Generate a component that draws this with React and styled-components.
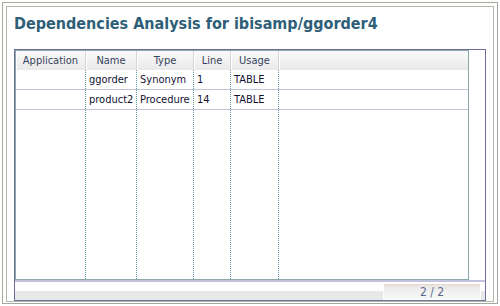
import React from 'react';
import styled, { createGlobalStyle } from 'styled-components';

const GlobalStyle = createGlobalStyle`
    body {
        margin: 0;
        background: #fff;
        font-family: "DejaVu Sans Condensed", "DejaVu Sans", sans-serif;
    }
`;

const Frame = styled.div`
    box-sizing: border-box;
    width: 496px;
    height: 302px;
    margin: 2px;
    padding: 3px 3px 1px 3px;
    border: 1px solid #a2a99e;
`;

const Window = styled.div`
    box-sizing: border-box;
    height: 100%;
    padding: 0 7px;
    border: 1px solid #b3b8ad;
    display: flex;
    flex-direction: column;
`;

const Title = styled.h1`
    margin: 0;
    height: 42px;
    padding-top: 7px;
    box-sizing: border-box;
    font-size: 16px;
    font-weight: bold;
    color: #2f5f78;
    white-space: nowrap;
`;

const Panel = styled.div`
    flex: 1;
    display: flex;
    flex-direction: column;
    border: 1px solid #6e6e9a;
    min-height: 0;
`;

const GridArea = styled.div`
    flex: 1;
    display: flex;
    padding-right: 16px;
    min-height: 0;
`;

const Grid = styled.div`
    flex: 1;
    display: flex;
    flex-direction: column;
    border: 1px solid #88a8a9;
`;

const COLUMNS = '70px 51px 57px 37px 48px 1fr';

const HeaderRow = styled.div`
    display: grid;
    grid-template-columns: ${ COLUMNS };
    height: 19px;
    background: linear-gradient(#fafafa, #e9e9e9);
`;

const HeaderCell = styled.div`
    display: flex;
    align-items: center;
    justify-content: center;
    font-size: 11px;
    color: #34445e;
    border-right: ${ p => ( p.$last ? 'none' : '1px solid #d4d4d4' ) };
    box-shadow: inset 1px 0 0 #fff;
`;

const Row = styled.div`
    display: grid;
    grid-template-columns: ${ COLUMNS };
    height: 20px;
    box-sizing: border-box;
    border-bottom: 1px solid #c1c4d8;
`;

const FillRow = styled.div`
    flex: 1;
    display: grid;
    grid-template-columns: ${ COLUMNS };
`;

const Cell = styled.div`
    display: flex;
    align-items: center;
    padding-left: 3px;
    overflow: hidden;
    font-size: 11px;
    color: #121232;
    white-space: nowrap;
    border-right: ${ p => ( p.$last ? 'none' : '1px dotted #5e9ca2' ) };
`;

const Divider = styled.div`
    height: 2px;
    background: #c2c2df;
`;

const Footer = styled.div`
    height: 18px;
    display: flex;
    justify-content: flex-end;
    padding: 1px 4px 0 0;
    box-sizing: border-box;
    background: linear-gradient(#fff 0, #fff 50%, #e8e8e8 50%, #e8e8e8 100%);
`;

const Pager = styled.div`
    width: 98px;
    box-sizing: border-box;
    border: 1px solid #fff;
    background: linear-gradient(#e6d8d0 0, #ebe8e6 15%, #f2f2f2 60%, #f6f6f6 100%);
    display: flex;
    align-items: center;
    justify-content: center;
    font-size: 12px;
    color: #5a6a8e;
`;

const columns = [ 'Application', 'Name', 'Type', 'Line', 'Usage', '' ];

const rows = [
    { app: '', name: 'ggorder', type: 'Synonym', line: '1', usage: 'TABLE' },
    { app: '', name: 'product2', type: 'Procedure', line: '14', usage: 'TABLE' }
];

export default function App() {
    return (
        <>
            <GlobalStyle />
            <Frame>
                <Window>
                    <Title>Dependencies Analysis for ibisamp/ggorder4</Title>
                    <Panel>
                        <GridArea>
                            <Grid>
                                <HeaderRow>
                                    { columns.map( ( c, i ) => (
                                        <HeaderCell key={ i } $last={ i === columns.length - 1 }>{ c }</HeaderCell>
                                    ) ) }
                                </HeaderRow>
                                { rows.map( r => (
                                    <Row key={ r.name }>
                                        <Cell>{ r.app }</Cell>
                                        <Cell>{ r.name }</Cell>
                                        <Cell>{ r.type }</Cell>
                                        <Cell>{ r.line }</Cell>
                                        <Cell>{ r.usage }</Cell>
                                        <Cell $last />
                                    </Row>
                                ) ) }
                                <FillRow>
                                    <Cell /><Cell /><Cell /><Cell /><Cell /><Cell $last />
                                </FillRow>
                            </Grid>
                        </GridArea>
                        <Divider />
                        <Footer>
                            <Pager>2 / 2</Pager>
                        </Footer>
                    </Panel>
                </Window>
            </Frame>
        </>
    );
}
